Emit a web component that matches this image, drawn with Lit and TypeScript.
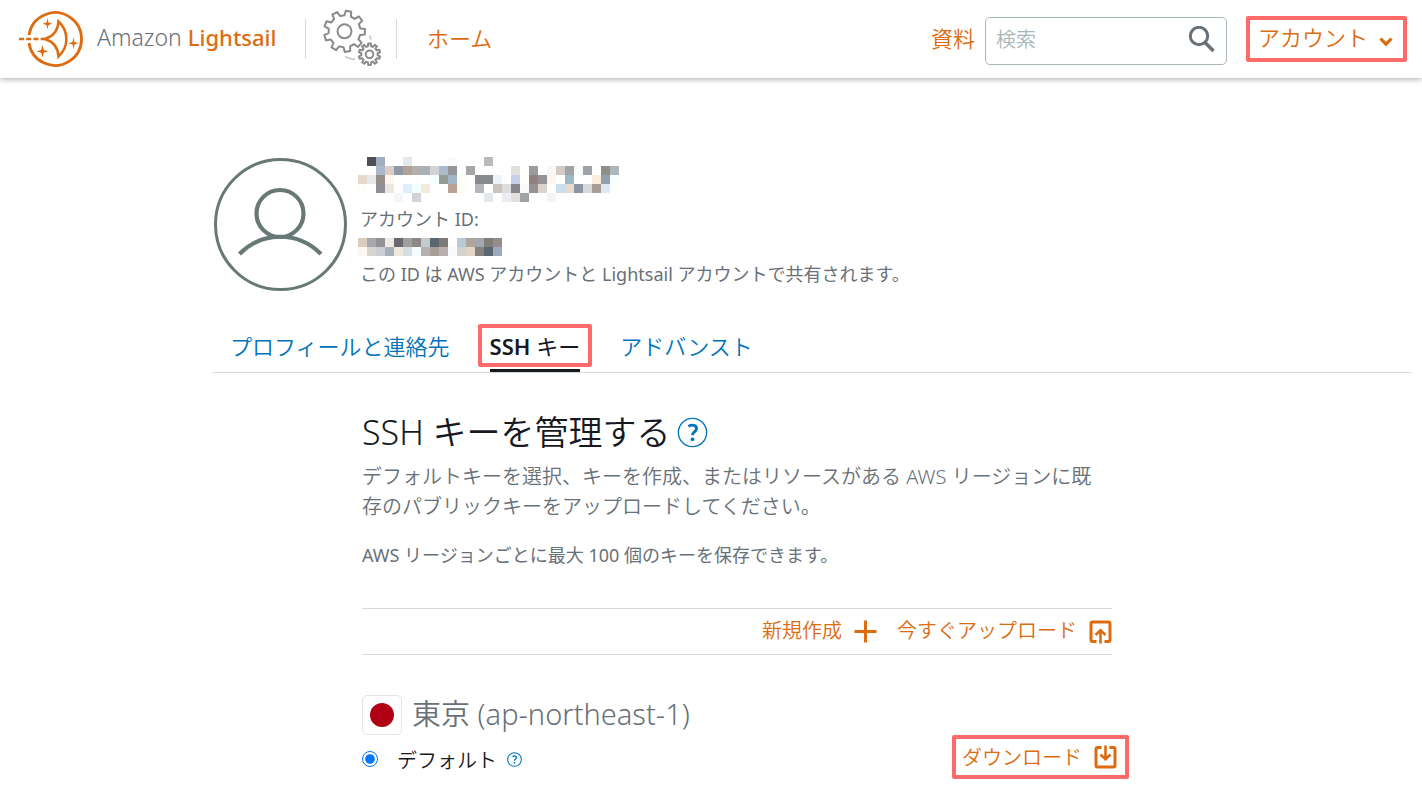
import { LitElement, html, css, svg } from "lit";
import { customElement, property } from "lit/decorators.js";

/** Builds the closed outline of a cog wheel. */
function cog(cx: number, cy: number, outer: number, inner: number, teeth: number, phase: number): string {
  const step = (Math.PI * 2) / teeth;
  const points: string[] = [];
  for (let i = 0; i < teeth; i++) {
    const mid = phase + i * step;
    const corners: [number, number][] = [
      [mid - step * 0.3, inner],
      [mid - step * 0.19, outer],
      [mid + step * 0.19, outer],
      [mid + step * 0.3, inner],
    ];
    for (const [angle, r] of corners) {
      points.push(`${(cx + Math.cos(angle) * r).toFixed(2)} ${(cy + Math.sin(angle) * r).toFixed(2)}`);
    }
  }
  return `M${points.join("L")}Z`;
}

// Pixelated rows: "column:colour" pairs, one string per row.
const NAME_ROWS = [
  "1:4f4f59 2:a0aec0 5:e6e7ea 10:fafafa 13:fefff8 14:bababa",
  "2:aab8cb 3:dccdc4 4:8f98a6 5:b5a098 6:b4aeac 7:a8b0bc 8:d2d3d3 9:a9bccb 10:959499 12:a5a4a6 17:e2dfde 19:999b9c 21:f8f8f8 22:d2cac6 23:a3a4a7 24:f8fafc 25:9fa2a8 27:8d9084 28:b0b7bc",
  "0:e6d8ca 1:e8e8e9 2:958f8b 3:fff6ec 8:f4ffff 9:939b92 10:a1b7c5 11:fffef3 13:87898b 14:87898b 15:ecf4fa 17:c6cee8 19:908080 20:949295 21:fcf6ee 23:a0b8c6 26:faebdb 27:90a0b1 28:f8ffff",
  "0:fdfcf8 2:8e8f98 3:ebe8e1 5:dfeef8 6:f2ffff 7:f4eada 10:b8a197 11:fffef2 13:b6b6bb 15:cbc1be 16:dedede 17:88868d 18:fafafc 19:989095 20:dcd3ca 22:cbdeef 23:e4dcd0 24:8e96a5 25:d7dbe0 26:a89c94 27:dce8f4",
  "4:f5f6f9 6:d2d2d8 14:e1e7eb 16:ebebf0 17:e2dfdc 18:9fa2a6 21:f4f4f4",
];
const ID_ROWS = [
  "0:dacdc0 1:a6a9ab 2:929292 3:efebe4 4:6c6873 5:9f9f9e 6:8d8785 7:c3cad2 8:5a666f 9:7c7b7a 11:b8c9d3 12:aea69c 13:a0a7ae 14:827d79 15:968d88",
  "0:fcf8f1 1:d8d5d0 2:cdced4 3:a7b1bc 4:efe8df 5:d2dde5 6:f4fcff 7:b4b0b0 8:a79e99 9:b9b0af 10:f9fafe 11:d6d1cd 12:e2d6c8 13:85807c 14:5a6770 15:9ba8be",
];

@customElement("pixel-mask")
class PixelMask extends LitElement {
  @property({ attribute: false }) rows: string[] = [];
  @property({ type: Number }) columns = 1;

  static styles = css`
    :host { display: block; }
    svg { display: block; }
  `;

  render() {
    const w = this.columns * 9;
    const h = this.rows.length * 9;
    return html`<svg width=${w} height=${h} viewBox="0 0 ${w} ${h}" shape-rendering="crispEdges" aria-hidden="true">
      ${this.rows.map((row, y) =>
        row.split(" ").map((cell) => {
          const [x, colour] = cell.split(":");
          return svg`<rect x=${Number(x) * 9} y=${y * 9} width="9" height="9" fill="#${colour}"></rect>`;
        })
      )}
    </svg>`;
  }
}

@customElement("app-root")
class AppRoot extends LitElement {
  static styles = css`
    :host {
      display: block;
      min-height: 100vh;
      box-sizing: border-box;
      overflow: hidden;
      background: #fff;
      color: #687078;
      font-family: "Noto Sans", "Noto Sans CJK JP", sans-serif;
      font-size: 20px;
      --orange: #dd6b10;
      --blue: #0073bb;
      --ink: #16191f;
    }
    * { box-sizing: border-box; }
    svg { display: block; flex: none; }
    a { text-decoration: none; color: inherit; }
    button {
      font: inherit;
      color: inherit;
      background: none;
      border: 0;
      padding: 0;
      cursor: pointer;
      white-space: nowrap;
    }
    h1, h2, p { margin: 0; font-weight: 350; }
    .marked { border: 4px solid #ff6b6b; border-radius: 2px; }

    .topbar {
      display: flex;
      align-items: center;
      height: 78px;
      padding: 0 15px 0 18px;
      box-shadow: 0 1px 6px rgba(0, 0, 0, 0.35);
      color: var(--orange);
      font-size: 22px;
      font-weight: 350;
      white-space: nowrap;
    }
    .brand { display: flex; align-items: center; gap: 12px; width: 287px; font-size: 23px; }
    .brand .word { color: #687078; padding-bottom: 4px; }
    .brand b { font-size: 22px; font-weight: 500; color: var(--orange); }
    .tools { display: flex; align-items: center; justify-content: center; width: 92px; height: 40px; border: solid #d5dbdb; border-width: 0 1px; }
    .link { padding-bottom: 5px; }
    .home { margin-left: 30px; }
    .right { display: flex; align-items: center; margin-left: auto; }
    .search {
      display: flex;
      align-items: center;
      width: 242px;
      height: 48px;
      margin: 4px 19px 0 10px;
      padding: 0 10px 2px;
      border: 1px solid #aab7b8;
      border-radius: 5px;
    }
    .search input {
      flex: 1;
      min-width: 0;
      border: 0;
      outline: 0;
      padding: 0;
      background: none;
      font: inherit;
      font-size: 20px;
      line-height: 30px;
      color: var(--ink);
    }
    .search input::placeholder { color: #aab7b8; opacity: 1; }
    .account { display: flex; align-items: center; gap: 11px; height: 46px; padding: 0 10px 6px 8px; }
    .account svg { margin-top: 12px; }

    main { padding: 78px 10px 24px 212px; }
    .profile { display: flex; gap: 10px; padding-left: 2px; }
    .who { display: flex; flex-direction: column; padding-top: 1px; font-size: 18px; line-height: 28px; }
    .who p { padding-left: 2px; }
    .who p, .note { font-weight: 400; }
    .name-mask { margin-bottom: 3px; }
    .id-mask { margin: 5px 0 4px; }

    .tabs {
      display: flex;
      align-items: flex-start;
      margin-top: 32px;
      border-bottom: 1px solid #d5dbdb;
      padding: 0 18px;
      height: 49px;
      font-size: 22px;
      font-weight: 350;
      color: var(--blue);
      white-space: nowrap;
    }
    .tabs a { line-height: 35px; padding: 5px 0; }
    .tabs a.current {
      position: relative;
      margin: 0 28px;
      padding: 2px 8px 0;
      line-height: 33px;
      border-width: 4px;
      color: var(--ink);
      font-weight: 400;
    }
    .tabs b { font-weight: 600; }
    .tabs a.current::after {
      content: "";
      position: absolute;
      left: 8px;
      right: 8px;
      bottom: -9px;
      height: 3px;
      background: var(--ink);
    }

    .panel { max-width: 750px; margin: 34px 0 0 150px; }
    .title { display: flex; align-items: center; gap: 6px; color: var(--ink); font-size: 34px; line-height: 50px; }
    .lead { margin-top: 5px; padding-right: 10px; line-height: 30px; }
    .note { margin-top: 20px; font-size: 18px; line-height: 26px; }
    .actions {
      display: flex;
      justify-content: flex-end;
      gap: 20px;
      margin-top: 40px;
      height: 47px;
      border: solid #d5dbdb;
      border-width: 1px 0;
      color: var(--orange);
      font-weight: 350;
    }
    .action { display: flex; align-items: center; gap: 12px; padding-bottom: 4px; }
    .action svg { margin-top: 4px; }
    .region { display: flex; align-items: center; gap: 10px; margin-top: 40px; font-size: 29px; line-height: 40px; height: 40px; }
    .region span:last-child { padding-bottom: 2px; }
    .flag {
      display: grid;
      place-items: center;
      width: 40px;
      height: 40px;
      border: 1px solid #e3e5e6;
      border-radius: 5px;
    }
    .flag i { width: 24px; height: 24px; border-radius: 50%; background: #b00016; }
    .key { display: flex; align-items: center; justify-content: space-between; margin-right: -17px; }
    .choice { display: flex; align-items: center; padding-top: 4px; color: var(--ink); font-weight: 350; }
    .choice input { width: 16px; height: 16px; margin: 0 19px 0 0; accent-color: #0075ff; }
    .choice svg { margin-left: 10px; }
    .download { display: flex; align-items: center; gap: 12px; height: 44px; padding: 0 8px 2px 6px; color: var(--orange); font-weight: 350; }
    .download svg { margin-top: 2px; }
  `;

  private help(size: number, stroke: number, label: string) {
    return html`<svg width=${size} height=${size} viewBox="0 0 32 32" fill="none" stroke="#0073bb" role="img" aria-label=${label}>
      <circle cx="16" cy="16" r="14.6" stroke-width=${stroke}></circle>
      <path d="M11.8 9.7c3.6-2.2 8.4-1.4 8.4 2.2 0 3.2-4.2 3.2-4.2 7" stroke-width="2.9"></path>
      <circle cx="16" cy="23" r="1.9" fill="#0073bb" stroke="none"></circle>
    </svg>`;
  }

  render() {
    return html`
      <header class="topbar">
        <a class="brand" href="#">
          <svg width="67" height="58" viewBox="0 0 67 58" fill="none" stroke="#dd6b10">
            <path d="M11 25A26.4 26.4 0 1 1 11 33" stroke-width="2.8"></path>
            <path d="M1 29H27" stroke-width="2.4" stroke-dasharray="5 2.2"></path>
            <path d="M40.5 11.5C51 21 51 37 40.5 46.500C40 38 35 31.500 27 29C35 26.500 40 20 40.500 11.500Z" stroke-width="2.5"></path>
            <g fill="#dd6b10" stroke="none">
              <path d="M29.500 8l1 4.500 4 1.300-4 1.300-1 4.500-1-4.500-4-1.300 4-1.300z"></path>
              <path d="M55.500 27.500l1 4.500 4 1.300-4 1.300-1 4.500-1-4.500-4-1.300 4-1.300z"></path>
              <path d="M24.500 35l1.400 4.900 4.600 1.400-4.600 1.400-1.400 4.800-1.400-4.800-4.600-1.400 4.600-1.400z"></path>
            </g>
          </svg>
          <span class="word">Amazon <b>Lightsail</b></span>
        </a>
        <div class="tools">
          <svg width="60" height="60" viewBox="0 0 60 60" fill="none" stroke="#888b8c" stroke-width="2" stroke-linejoin="round">
            <path d=${cog(23.5, 22.3, 20.6, 16, 9, -1.37)}></path>
            <circle cx="23.5" cy="22.3" r="7"></circle>
            <path d=${cog(48.5, 45.3, 10.8, 8.2, 10, -1.57)}></path>
            <circle cx="48.5" cy="45.3" r="3.8"></circle>
            <path d="M24 47.500c3 2 6 2.800 10 2.600M48.500 26.500l1.500 4" stroke="#ccc"></path>
          </svg>
        </div>
        <a class="link home" href="#">ホーム</a>
        <div class="right">
          <a class="link" href="#">資料</a>
          <label class="search">
            <input type="text" placeholder="検索" aria-label="検索" />
            <svg width="28" height="28" viewBox="0 0 28 28" fill="none" stroke="#687078" stroke-width="3">
              <circle cx="11" cy="10" r="8.700"></circle>
              <path d="M17 16.500L25.500 25" stroke-width="3.600"></path>
            </svg>
          </label>
          <button class="account marked">
            アカウント
            <svg width="14" height="10" viewBox="0 0 14 10" fill="none" stroke="#dd6b10" stroke-width="3.200"><path d="M1.500 1.500L7 7.200 12.500 1.500"></path></svg>
          </button>
        </div>
      </header>

      <main>
        <section class="profile">
          <svg width="134" height="136" viewBox="0 0 134 136" fill="none" stroke="#687876">
            <circle cx="66.500" cy="68.500" r="65" stroke-width="3"></circle>
            <circle cx="66" cy="57.500" r="23.500" stroke-width="4.200"></circle>
            <path d="M25.500 98C48 75 84 75 107 98" stroke-width="4.200"></path>
          </svg>
          <div class="who">
            <pixel-mask class="name-mask" .rows=${NAME_ROWS} .columns=${29}></pixel-mask>
            <p>アカウント ID:</p>
            <pixel-mask class="id-mask" .rows=${ID_ROWS} .columns=${16}></pixel-mask>
            <p>この ID は AWS アカウントと Lightsail アカウントで共有されます。</p>
          </div>
        </section>

        <nav class="tabs">
          <a href="#">プロフィールと連絡先</a>
          <a href="#" class="current marked" aria-current="page"><b>SSH</b> キー</a>
          <a href="#">アドバンスト</a>
        </nav>

        <section class="panel">
          <h1 class="title">SSH キーを管理する ${this.help(31, 1.4, "ヘルプ")}</h1>
          <p class="lead">デフォルトキーを選択、キーを作成、またはリソースがある AWS リージョンに既存のパブリックキーをアップロードしてください。</p>
          <p class="note">AWS リージョンごとに最大 100 個のキーを保存できます。</p>
          <div class="actions">
            <button class="action">
              新規作成
              <svg width="23" height="23" viewBox="0 0 23 23" stroke="#dd6b10" stroke-width="3"><path d="M11.500 0.500V22.500M0.500 11.500H22.500"></path></svg>
            </button>
            <button class="action">
              今すぐアップロード
              <svg width="23" height="24" viewBox="0 0 23 24" fill="none" stroke="#dd6b10" stroke-width="3">
                <path d="M7.500 21.500H3.500Q2 21.500 2 20V3.500Q2 2 3.500 2H19.500Q21 2 21 3.500V20Q21 21.500 19.500 21.500H15.500"></path>
                <path d="M11.500 23.500V11M6.500 15L11.500 10.300 16.500 15" stroke-width="2.600"></path>
              </svg>
            </button>
          </div>

          <h2 class="region"><span class="flag"><i></i></span><span>東京 (ap-northeast-1)</span></h2>
          <div class="key">
            <label class="choice">
              <input type="radio" name="key" checked />デフォルト ${this.help(15, 2.2, "ヘルプ")}
            </label>
            <button class="download marked">
              ダウンロード
              <svg width="23" height="24" viewBox="0 0 23 24" fill="none" stroke="#dd6b10" stroke-width="3">
                <path d="M7.500 2.500H3.500Q2 2.500 2 4V20.500Q2 22 3.500 22H19.500Q21 22 21 20.500V4Q21 2.500 19.500 2.500H15.500"></path>
                <path d="M11.500 0.500V14M6.500 9.500L11.500 14.200 16.500 9.500" stroke-width="2.600"></path>
              </svg>
            </button>
          </div>
        </section>
      </main>
    `;
  }
}
